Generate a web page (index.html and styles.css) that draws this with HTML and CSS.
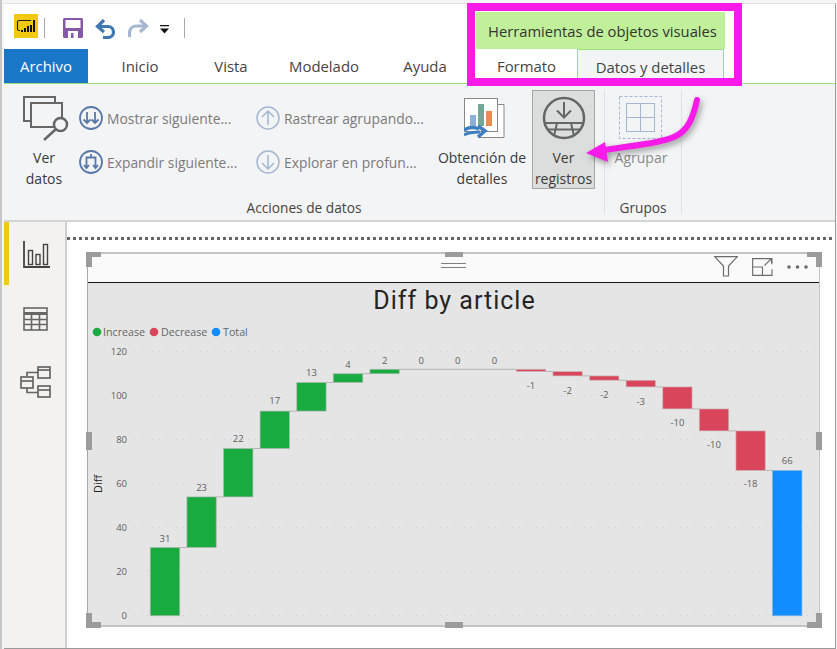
FILE: index.html
```html
<!DOCTYPE html>
<html lang="es">
<head>
<meta charset="utf-8">
<title>Ver registros</title>
<link rel="stylesheet" href="styles.css">
</head>
<body>
<div class="page">
  <div class="window">
    <header class="head">
      <div class="head-main">
        <div class="quick">
          <svg class="logo" width="24" height="24" viewBox="0 0 24 24"><rect width="24" height="24" fill="#f2c811"/><path d="M6 16.500H5a1.500 1.500 0 0 1-1.500-1.500V8A1.500 1.500 0 0 1 5 6.500H17" fill="none" stroke="#222" stroke-width="1.200"/><path d="M8 18v-2M11 18v-4M14 18v-6M17 18v-7M20 18V6" stroke="#111" stroke-width="2"/></svg>
          <span class="qsep"></span>
          <svg class="save" width="20" height="20" viewBox="0 0 20 20"><path d="M1.500 0H18.500A1.500 1.500 0 0 1 20 1.500V18.500A1.500 1.500 0 0 1 18.500 20H1.500A1.500 1.500 0 0 1 0 18.500V1.500A1.500 1.500 0 0 1 1.500 0Z" fill="#8659a8"/><rect x="2.500" y="2" width="15" height="8" fill="#fff"/><rect x="5" y="13" width="10" height="7" fill="#fff"/><rect x="8" y="15" width="2.500" height="5" fill="#8659a8"/></svg>
          <svg class="undo" width="22" height="20" viewBox="0 0 22 20"><path d="M9 1 2.500 7.500 9 13" fill="none" stroke="#3f78b0" stroke-width="3.200"/><path d="M3 7.500h10a5.500 5.500 0 0 1 0 11H8" fill="none" stroke="#3f78b0" stroke-width="3.200"/></svg>
          <svg class="redo" width="21" height="20" viewBox="0 0 21 20"><path d="M12 1l6.500 6L12 13" fill="none" stroke="#a6b8d0" stroke-width="3.200"/><path d="M18 7H9C4.500 7 1.500 10 1.500 14v4" fill="none" stroke="#a6b8d0" stroke-width="3.200"/></svg>
          <svg class="drop" width="9" height="9" viewBox="0 0 9 9"><path d="M0 0h9v1.200H0zM0 3.500h9L4.500 8.500z" fill="#111"/></svg>
          <span class="qsep qsep-last"></span>
        </div>
        <nav class="tabs">
          <span class="tab tab-file">Archivo</span>
          <span class="tab tab-inicio">Inicio</span>
          <span class="tab tab-vista">Vista</span>
          <span class="tab tab-model">Modelado</span>
          <span class="tab tab-ayuda">Ayuda</span>
        </nav>
      </div>
      <div class="context">
        <div class="context-title">Herramientas de objetos visuales</div>
        <div class="context-tabs">
          <span class="ctab ctab-format">Formato</span>
          <span class="ctab ctab-data">Datos y detalles</span>
        </div>
      </div>
    </header>

    <section class="ribbon">
      <div class="group group-actions">
        <div class="group-body">
          <div class="big big-datos">
            <div class="big-icon icon-datos">
              <svg width="46" height="46" viewBox="0 0 46 46" fill="none" stroke="#666" stroke-width="2"><path d="M7 25H1V1H32V7"/><rect x="8" y="7" width="31" height="24" fill="#f3f4f6"/><circle cx="37.500" cy="28.500" r="6.500" fill="#f3f4f6" stroke-width="2.500"/><path d="M32.500 33.500 21 44" stroke-width="2.500"/></svg>
            </div>
            <span class="big-text">Ver<br>datos</span>
          </div>
          <div class="small-col small-col-a">
            <div class="small">
              <svg width="24" height="24" viewBox="0 0 24 24" fill="none" stroke="#5a78a8" stroke-width="1.800"><circle cx="12" cy="12" r="11"/><path d="M8 6v11M4.500 13.500 8 17l3.500-3.500M16 6v11M12.500 13.500 16 17l3.500-3.500"/></svg>
              <span>Mostrar siguiente...</span>
            </div>
            <div class="small">
              <svg width="24" height="24" viewBox="0 0 24 24" fill="none" stroke="#5a78a8" stroke-width="1.800"><circle cx="12" cy="12" r="11"/><path d="M7.500 18V7.500h9V18M12 4v3.500M5 15l2.500 3 2.500-3M14 15l2.500 3 2.500-3"/></svg>
              <span>Expandir siguiente...</span>
            </div>
          </div>
          <div class="small-col small-col-b">
            <div class="small">
              <svg width="24" height="24" viewBox="0 0 24 24" fill="none" stroke="#a5b6d0" stroke-width="1.500"><circle cx="12" cy="12" r="11"/><path d="M12 19V5M6 11l6-6 6 6"/></svg>
              <span>Rastrear agrupando...</span>
            </div>
            <div class="small">
              <svg width="24" height="24" viewBox="0 0 24 24" fill="none" stroke="#a5b6d0" stroke-width="1.500"><circle cx="12" cy="12" r="11"/><path d="M12 5v14M6 13l6 6 6-6"/></svg>
              <span>Explorar en profun...</span>
            </div>
          </div>
          <div class="big big-insight">
            <div class="big-icon icon-insight">
              <svg width="41" height="45" viewBox="0 0 41 45"><path d="M34 6.500h6v33H14" fill="#fff" stroke="#888"/><rect x="0.500" y="0.500" width="33" height="33" fill="#fff" stroke="#888"/><rect x="6" y="17" width="6" height="11" fill="#8cb0d8"/><rect x="14" y="6" width="6" height="22" fill="#72a898"/><rect x="22" y="13" width="6" height="15" fill="#e88c50"/><path d="M0 32c5-3 11-3 15-1" fill="none" stroke="#3f7fc0" stroke-width="3.500"/><path d="M14 28l7 5-7 6" fill="none" stroke="#3f7fc0" stroke-width="3.500"/><path d="M0 37c5-3 10-3 16-3" fill="none" stroke="#3f7fc0" stroke-width="3"/></svg>
            </div>
            <span class="big-text">Obtención de<br>detalles</span>
          </div>
          <div class="big big-records">
            <div class="big-icon icon-records">
              <svg width="44" height="44" viewBox="0 0 44 44" fill="none" stroke="#666" stroke-width="2.500"><circle cx="22" cy="22" r="20"/><path d="M22 6v15M15 14.500l7 7 7-7" stroke-width="2"/><path d="M2.500 27h39M5 33.500h34M15 27l-3 13M29 27l3 13" stroke-width="2"/></svg>
            </div>
            <span class="big-text">Ver<br>registros</span>
          </div>
        </div>
        <div class="group-label">Acciones de datos</div>
      </div>
      <div class="group group-groups">
        <div class="group-body">
          <div class="big big-group">
            <div class="big-icon icon-group">
              <svg width="44" height="43" viewBox="0 0 44 43" fill="none"><rect x="0.500" y="0.500" width="42" height="42" stroke="#a5b6d0" stroke-dasharray="3 2"/><rect x="7.500" y="7.500" width="28" height="28" stroke="#a5b6d0"/><path d="M21.500 7.500v28M7.500 21.500h28" stroke="#a5b6d0"/></svg>
            </div>
            <span class="big-text big-text-off">Agrupar</span>
          </div>
        </div>
        <div class="group-label">Grupos</div>
      </div>
    </section>

    <main class="main">
      <aside class="rail">
        <div class="rail-item rail-item-active">
          <svg width="27" height="27" viewBox="0 0 27 27" fill="none" stroke="#444" stroke-width="1.400"><path d="M1 0v26h26" stroke-width="1.800"/><rect x="5.500" y="9.500" width="4" height="14"/><rect x="13" y="13.500" width="4" height="10"/><rect x="20.500" y="3.500" width="4" height="20"/></svg>
        </div>
        <div class="rail-item rail-item-table">
          <svg width="25" height="24" viewBox="0 0 25 24" fill="none" stroke="#666" stroke-width="1.600"><rect x="1" y="1" width="23" height="22"/><path d="M1 6.500h23" stroke-width="3"/><path d="M1 12.500h23M1 17.500h23M8.500 7v16M16.500 7v16"/></svg>
        </div>
        <div class="rail-item rail-item-model">
          <svg width="31" height="32" viewBox="0 0 31 32" fill="none" stroke="#666" stroke-width="1.700"><rect x="1" y="11" width="12" height="11"/><path d="M1 15h12"/><rect x="18" y="1" width="12" height="11"/><path d="M18 4h12"/><rect x="18" y="20" width="12" height="11"/><path d="M18 24h12"/><path d="M7 11V6.500h11M7 22v4.500h11"/></svg>
        </div>
      </aside>
      <div class="canvas">
        <div class="dots"></div>
        <article class="visual">
          <div class="visual-head">
            <svg class="grip" width="25" height="6" viewBox="0 0 25 6"><path d="M0 .5h25M0 4.500h25" stroke="#808080"/></svg>
            <div class="visual-tools">
              <svg width="24" height="21" viewBox="0 0 24 21" fill="none" stroke="#6b6b6b" stroke-width="1.200"><path d="M.6.600h22.800L14.500 10v10h-5V10z"/></svg>
              <svg width="21" height="18" viewBox="0 0 22 19" fill="none" stroke="#6b6b6b" stroke-width="1.200"><path d="M21 6.500V.6H.6v17.800H21V12M.6 9.500h10.400v8.900M13 8l7.500-7.500M15.500.6h5v5"/></svg>
              <svg width="21" height="4" viewBox="0 0 21 4" fill="#6b6b6b"><circle cx="2" cy="2" r="1.800"/><circle cx="10.500" cy="2" r="1.800"/><circle cx="19" cy="2" r="1.800"/></svg>
            </div>
          </div>
          <svg class="chart" width="731" height="342" viewBox="88 283 731 342">
            <g class="grid">
              <path d="M135 351.500H815M135 395.500H815M135 439.500H815M135 483.500H815M135 527.500H815M135 571.500H815M135 615.500H815"/>
            </g>
            <text class="title" x="454.500" y="308.500" text-anchor="middle">Diff by article</text>
            <g class="legend">
              <circle cx="97" cy="332" r="4.300" fill="#1aab40"/><text x="103" y="336">Increase</text>
              <circle cx="154" cy="332" r="4.300" fill="#d9455a"/><text x="161" y="336">Decrease</text>
              <circle cx="216" cy="332" r="4.300" fill="#118dff"/><text x="223" y="336">Total</text>
            </g>
            <g class="axis" text-anchor="end">
              <text x="127" y="355">120</text><text x="127" y="399">100</text><text x="127" y="443">80</text><text x="127" y="487">60</text><text x="127" y="531">40</text><text x="127" y="575">20</text><text x="127" y="619">0</text>
            </g>
            <text class="axis-title" transform="translate(102 484) rotate(-90)" text-anchor="middle">Diff</text>
            <path class="links" d="M179.700 547.500H187M216.300 496.900H223.500M252.900 448.500H260.100M289.500 411.100H296.700M326.100 382.500H333.300M362.700 373.700H369.900M399.300 369.300H516.300M545.700 371.500H552.900M582.300 375.900H589.500M618.900 380.300H626.100M655.500 386.900H662.700M692.100 408.900H699.300M728.700 430.900H735.900M765.300 470.500H772.500"/>
            <g class="bars inc">
              <rect x="150.300" y="547.500" width="29.400" height="68.200"/>
              <rect x="186.900" y="496.900" width="29.400" height="50.600"/>
              <rect x="223.500" y="448.500" width="29.400" height="48.400"/>
              <rect x="260.100" y="411.100" width="29.400" height="37.400"/>
              <rect x="296.700" y="382.500" width="29.400" height="28.600"/>
              <rect x="333.300" y="373.700" width="29.400" height="8.800"/>
              <rect x="369.900" y="369.300" width="29.400" height="4.400"/>
            </g>
            <g class="bars dec">
              <rect x="516.300" y="369.300" width="29.400" height="2.200"/>
              <rect x="552.900" y="371.500" width="29.400" height="4.400"/>
              <rect x="589.500" y="375.900" width="29.400" height="4.400"/>
              <rect x="626.100" y="380.300" width="29.400" height="6.600"/>
              <rect x="662.700" y="386.900" width="29.400" height="22"/>
              <rect x="699.300" y="408.900" width="29.400" height="22"/>
              <rect x="735.900" y="430.900" width="29.400" height="39.600"/>
            </g>
            <g class="bars total">
              <rect x="772.500" y="470.500" width="29.400" height="145.200"/>
            </g>
            <g class="labels" text-anchor="middle">
              <text x="165" y="541.500">31</text><text x="201.600" y="491">23</text><text x="238.200" y="442">22</text><text x="274.800" y="404">17</text><text x="311.400" y="376">13</text><text x="348" y="367.500">4</text><text x="384.600" y="363.500">2</text><text x="421.200" y="363.500">0</text><text x="457.800" y="363.500">0</text><text x="494.400" y="363.500">0</text>
              <text x="531" y="388.500">-1</text><text x="567.600" y="393.500">-2</text><text x="604.200" y="397.500">-2</text><text x="640.800" y="405">-3</text><text x="677.400" y="426">-10</text><text x="714" y="448">-10</text><text x="750.600" y="487">-18</text><text x="787.200" y="464">66</text>
            </g>
          </svg>
          <span class="handle h-tl-a"></span><span class="handle h-tl-b"></span>
          <span class="handle h-tr-a"></span><span class="handle h-tr-b"></span>
          <span class="handle h-bl-a"></span><span class="handle h-bl-b"></span>
          <span class="handle h-br-a"></span><span class="handle h-br-b"></span>
          <span class="handle h-top"></span><span class="handle h-bottom"></span>
          <span class="handle h-left"></span><span class="handle h-right"></span>
        </article>
      </div>
    </main>
  </div>
  <div class="callout-box"></div>
  <svg class="callout-arrow" width="130" height="80" viewBox="580 92 130 80"><path d="M697 100c-4 18-9 30-21 36-14 7-40 9-78 15" fill="none" stroke="#f71ae9" stroke-width="6" stroke-linecap="round"/><path d="M586 153l19-11 3 20z" fill="#f71ae9"/></svg>
</div>
</body>
</html>
```

FILE: styles.css
```css
* { box-sizing: border-box; }
html, body { margin: 0; padding: 0; }
body {
  background: #fff;
  font-family: "Open Sans", "Liberation Sans", sans-serif;
  color: #333;
}
.page {
  position: relative;
  width: 837px;
  height: 649px;
  overflow: hidden;
  padding: 3px 1px 0 2px;
  border-left: 2px solid #c6c6c6;
  background: #f4f4f4;
}
.window {
  height: 646px;
  display: flex;
  flex-direction: column;
  background: #fff;
  border-top: 1px solid #e2e2e2;
  border-right: 1px solid #999;
  border-bottom: 1px solid #999;
}

/* header */
.head {
  display: flex;
  height: 80px;
  border-bottom: 1px solid #9de07a;
}
.head-main { width: 472px; display: flex; flex-direction: column; }
.quick {
  height: 45px;
  display: flex;
  align-items: flex-start;
  padding-left: 10px;
}
.logo { margin-top: 10px; }
.qsep { width: 1px; height: 20px; margin: 14px 0 0 6px; background: #a8a8a8; }
.qsep-last { margin-left: 15px; }
.save { margin: 14px 0 0 18px; }
.undo { margin: 15px 0 0 12px; }
.redo { margin: 15px 0 0 11px; }
.drop { margin: 21px 0 0 11px; }
.tabs { display: flex; height: 34px; }
.tab {
  display: flex;
  align-items: center;
  justify-content: center;
  font-size: 14.900px;
  color: #444;
}
.tab-file { width: 84px; background: #1a76c8; color: #fff; }
.tab-inicio { width: 104px; }
.tab-vista { width: 78px; }
.tab-model { width: 108px; }
.tab-ayuda { width: 94px; }
.context {
  width: 249px;
  margin-top: 8px;
  display: flex;
  flex-direction: column;
}
.context-title {
  height: 37px;
  background: #c0f09a;
  display: flex;
  align-items: center;
  padding-left: 12px;
  font-size: 14.750px;
  color: #333;
  white-space: nowrap;
}
.context-tabs { display: flex; height: 34px; }
.ctab {
  display: flex;
  align-items: center;
  justify-content: center;
  font-size: 14.900px;
  color: #444;
}
.ctab-format { width: 101px; background: #fff; }
.ctab-data {
  width: 147px;
  background: #f3f4f6;
  border: 1px solid #9de07a;
  border-bottom: 0;
}

/* ribbon */
.ribbon {
  height: 138px;
  display: flex;
  background: #f3f4f6;
  border-bottom: 2px solid #d4d4d4;
}
.group {
  display: flex;
  flex-direction: column;
  border-right: 1px solid #e0e1e3;
  margin-top: 6px;
  height: 124px;
}
.group-actions { width: 601px; }
.group-groups { width: 77px; }
.group-body { height: 109px; display: flex; flex: none; }
.group-label {
  height: 18px;
  text-align: center;
  font-size: 13.700px;
  line-height: 18px;
  color: #444;
  white-space: nowrap;
}
.big {
  height: 99px;
  display: flex;
  flex-direction: column;
  align-items: center;
}
.big-icon {
  height: 57px;
  flex: none;
  display: flex;
  align-items: flex-start;
  justify-content: center;
}
.icon-datos { padding: 6px 0 0 3px; }
.icon-insight { padding: 8px 0 0 5px; }
.icon-records { height: 56px; padding-top: 5px; }
.icon-group { padding-top: 6px; }
.big-text {
  font-size: 14px;
  line-height: 21px;
  text-align: center;
  color: #3a3a3a;
  white-space: nowrap;
}
.big-text-off { color: #8a8a8a; }
.big-datos { width: 62px; margin-left: 9px; }
.big-insight { width: 90px; }
.big-records {
  width: 63px;
  margin-left: 5px;
  background: #dcdedd;
  border: 1px solid #a5a5a5;
}
.big-group { width: 72px; }
.small-col { padding-top: 6px; display: flex; flex-direction: column; }
.small-col-a { width: 177px; margin-left: 4px; }
.small-col-b { width: 181px; }
.small {
  height: 44px;
  display: flex;
  align-items: center;
  gap: 4px;
  font-size: 13.850px;
  color: #7a7a7a;
  white-space: nowrap;
}

/* main */
.main { flex: 1; display: flex; min-height: 0; }
.rail {
  width: 63px;
  background: #f3f2f1;
  border-right: 2px solid #cfcfcf;
  display: flex;
  flex-direction: column;
}
.rail-item { display: flex; justify-content: center; }
.rail-item-active {
  height: 63px;
  padding: 19px 3px 0 2px;
  border-left: 5px solid #f2c811;
}
.rail-item-table { padding-top: 22px; padding-left: 2px; }
.rail-item-model { padding-top: 35px; padding-left: 2px; }
.canvas { flex: 1; padding-top: 15px; min-width: 0; }
.dots {
  height: 3px;
  background: repeating-linear-gradient(90deg, #666 0 3px, transparent 3px 6px);
}
.visual {
  position: relative;
  width: 733px;
  height: 375px;
  margin: 12px 0 0 20px;
  border: 1px solid #c4c4c4;
  border-top-width: 2px;
  border-bottom-width: 2px;
  border-left-color: #a8a8a8;
  background: #e5e5e5;
  display: flex;
  flex-direction: column;
}
.visual-head {
  position: relative;
  height: 29px;
  flex: none;
  background: #fafafa;
  border-bottom: 1px solid #111;
  display: flex;
  justify-content: flex-end;
}
.grip { position: absolute; left: 353px; top: 9px; }
.visual-tools {
  display: flex;
  align-items: center;
  gap: 14px;
  padding: 0 11px 3px 0;
}
.chart { display: block; flex: none; }
.grid path { stroke: #cfcfcf; stroke-dasharray: 1 5; fill: none; }
.title { font-family: Roboto, sans-serif; font-size: 25px; letter-spacing: 1px; fill: #252423; }
.legend text { font-family: "Open Sans", sans-serif; font-size: 10.700px; fill: #666; }
.axis text, .labels text { font-family: "Open Sans", sans-serif; font-size: 9.500px; fill: #605e5c; }
.axis-title { font-family: "Open Sans", sans-serif; font-size: 11px; fill: #222; }
.links { stroke: #b5b5b5; fill: none; }
.bars rect { stroke-width: 1; stroke-opacity: .6; }
.inc rect { fill: #1aab40; stroke: #b5b5b5; }
.dec rect { fill: #d9455a; stroke: #c5c5c5; }
.total rect { fill: #118dff; stroke: #7fb2dd; }

/* selection handles */
.handle { position: absolute; background: #9b9b9b; }
.h-tl-a { left: -2px; top: -2px; width: 15px; height: 5px; }
.h-tl-b { left: -2px; top: -2px; width: 6px; height: 15px; }
.h-tr-a { right: -3px; top: -2px; width: 15px; height: 5px; }
.h-tr-b { right: -3px; top: -2px; width: 6px; height: 15px; }
.h-bl-a { left: -2px; bottom: -3px; width: 15px; height: 6px; }
.h-bl-b { left: -2px; bottom: -3px; width: 6px; height: 15px; }
.h-br-a { right: -3px; bottom: -3px; width: 15px; height: 6px; }
.h-br-b { right: -3px; bottom: -3px; width: 6px; height: 15px; }
.h-top { left: 357px; top: -2px; width: 18px; height: 5px; }
.h-bottom { left: 357px; bottom: -3px; width: 18px; height: 6px; }
.h-left { left: -2px; top: 178px; width: 6px; height: 18px; }
.h-right { right: -3px; top: 178px; width: 6px; height: 18px; }

/* annotations */
.callout-box {
  position: absolute;
  left: 465px;
  top: 3px;
  width: 275px;
  height: 83px;
  border: 8px solid #f71ae9;
}
.callout-arrow {
  position: absolute;
  left: 578px;
  top: 92px;
  filter: drop-shadow(2px 3px 3px rgba(60, 60, 60, .5));
}
```
